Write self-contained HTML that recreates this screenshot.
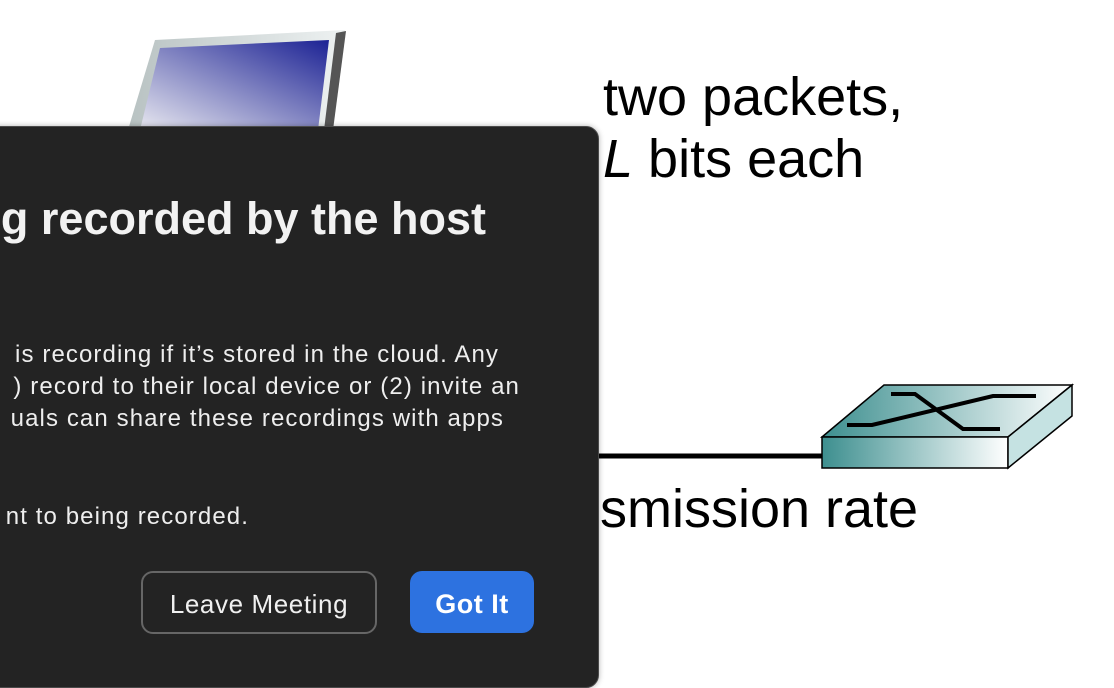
<!DOCTYPE html>
<html><head><meta charset="utf-8"><style>
html,body{margin:0;padding:0;width:1114px;height:654px;overflow:hidden;background:#fff;font-family:"Liberation Sans",sans-serif}
.abs{position:absolute;white-space:nowrap}
.slide{font-size:54px;color:#000}
#dlg{position:absolute;left:-20px;top:126px;width:617px;height:560px;background:#232323;border:1px solid #4a4a4a;border-radius:13px;box-shadow:0 0 6px rgba(0,0,0,.3)}
.r{position:absolute;right:0;text-align:right;color:#eee;white-space:nowrap}
.b{font-size:24px;letter-spacing:1.1px}
</style></head><body>
<svg class="abs" style="left:0;top:0" width="1114" height="654">
<defs>
<linearGradient id="scr" x1="0" y1="1" x2="1" y2="0"><stop offset="0" stop-color="#e8e8f0"/><stop offset="1" stop-color="#1c2294"/></linearGradient>
<linearGradient id="sw" x1="0" x2="1"><stop offset="0" stop-color="#3d8f8f"/><stop offset="1" stop-color="#ffffff"/></linearGradient>
<linearGradient id="fr" x1="0" x2="1"><stop offset="0" stop-color="#b8c2c2"/><stop offset="1" stop-color="#eef2f2"/></linearGradient>
</defs>
<polygon points="155,40 345,30 330,130 128,130" fill="url(#fr)"/>
<polygon points="336,33 346,31 333,130 324,130" fill="#555"/>
<polygon points="160,48 329,40 318,130 140,130" fill="url(#scr)"/>
<line x1="598" y1="456" x2="822" y2="456" stroke="#000" stroke-width="5"/>
<polygon points="822,437 884,385 1072,385 1008,437" fill="url(#sw)" stroke="#000" stroke-width="1.5"/>
<polygon points="822,437 1008,437 1008,468 822,468" fill="url(#sw)" stroke="#000" stroke-width="1.5"/>
<polygon points="1008,437 1072,385 1072,416 1008,468" fill="#c5e2e2" stroke="#000" stroke-width="1.5"/>
<polyline points="891,394 915,394 963,429 1000,429" fill="none" stroke="#000" stroke-width="4"/>
<polyline points="847,425 872,425 993,396 1036,396" fill="none" stroke="#000" stroke-width="4"/>
</svg>
<div class="abs slide" style="left:603px;top:66px">two packets,</div>
<div class="abs slide" style="left:603px;top:128px"><i>L</i> bits each</div>
<div class="abs slide" style="left:600px;top:478px">smission rate</div>
<div id="dlg">
<div class="r" style="right:112px;top:66px;font-size:45px;font-weight:bold;color:#f2f2f2">g recorded by the host</div>
<div class="r b" style="right:99px;top:214px">is recording if it’s stored in the cloud. Any</div>
<div class="r b" style="right:78px;top:246px">) record to their local device or (2) invite an</div>
<div class="r b" style="right:94px;top:278px">uals can share these recordings with apps</div>
<div class="r b" style="right:349px;top:376px">nt to being recorded.</div>
<div style="position:absolute;left:160px;top:444px;width:232px;height:59px;border:2px solid #666;border-radius:12px;color:#f0f0f0;font-size:26px;letter-spacing:0.6px;line-height:63px;text-align:center">Leave Meeting</div>
<div style="position:absolute;left:429px;top:444px;width:124px;height:62px;background:#2d72e0;border-radius:12px;color:#fff;font-size:27px;letter-spacing:0.5px;font-weight:bold;line-height:66px;text-align:center">Got It</div>
</div>
</body></html>
